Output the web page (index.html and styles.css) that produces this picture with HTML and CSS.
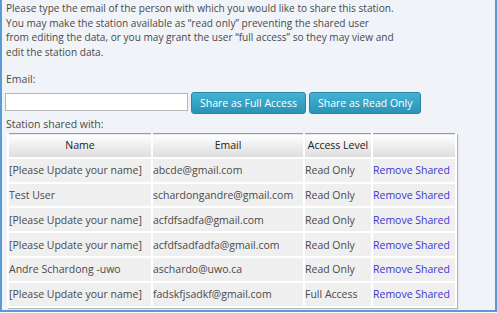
FILE: index.html
```html
<!DOCTYPE html>
<html lang="en">
<head>
  <meta charset="UTF-8" />
  <title>Share Station</title>
  <link rel="stylesheet" href="styles.css">
</head>
<body>
  <div class="panel">
    <p class="intro">
      Please type the email of the person with which you would like to share this station.<br>
      You may make the station available as &ldquo;read only&rdquo; preventing the shared user<br>
      from editing the data, or you may grant the user &ldquo;full access&rdquo; so they may view and<br>
      edit the station data.
    </p>

    <label class="field-label email-label" for="shareEmail">Email:</label>
    <div class="share-row">
      <input type="text" id="shareEmail">
      <button class="share-btn">Share as Full Access</button>
      <button class="share-btn">Share as Read Only</button>
    </div>

    <p class="field-label shared-label">Station shared with:</p>
    <table class="shared-table">
      <thead>
        <tr>
          <th class="col-name">Name</th>
          <th class="col-email">Email</th>
          <th class="col-access">Access Level</th>
          <th class="col-action"></th>
        </tr>
      </thead>
      <tbody>
        <tr><td>[Please Update your name]</td><td>abcde@gmail.com</td><td>Read Only</td><td><a href="#">Remove Shared</a></td></tr>
        <tr><td>Test User</td><td>schardongandre@gmail.com</td><td>Read Only</td><td><a href="#">Remove Shared</a></td></tr>
        <tr><td>[Please Update your name]</td><td>acfdfsadfa@gmail.com</td><td>Read Only</td><td><a href="#">Remove Shared</a></td></tr>
        <tr><td>[Please Update your name]</td><td>acfdfsadfadfa@gmail.com</td><td>Read Only</td><td><a href="#">Remove Shared</a></td></tr>
        <tr><td>Andre Schardong -uwo</td><td>aschardo@uwo.ca</td><td>Read Only</td><td><a href="#">Remove Shared</a></td></tr>
        <tr><td>[Please Update your name]</td><td>fadskfjsadkf@gmail.com</td><td>Full Access</td><td><a href="#">Remove Shared</a></td></tr>
      </tbody>
    </table>
  </div>
</body>
</html>
```

FILE: styles.css
```css
body {
  margin: 0;
  font-family: "Open Sans", Arial, sans-serif;
  font-size: 10.5px;
  color: #4a4a4a;
  background-color: #fff;
}

.panel {
  height: 312px;
  box-sizing: border-box;
  background-color: #f0f3f7;
  border: 2px solid #5b9bd5;
  border-top: none;
  padding: 1px 4px 0 4px;
}

.intro {
  margin: 0;
  font-size: 10.1px;
  line-height: 14.5px;
}

.field-label {
  display: block;
  line-height: 14.5px;
}

.email-label {
  margin: 13px 0 5px 0;
}

.shared-label {
  margin: 3px 0 2px 0;
}

.share-row {
  display: flex;
  align-items: flex-start;
  gap: 3px;
}

.share-row input {
  width: 183px;
  height: 18px;
  box-sizing: border-box;
  border: 1px solid #b5b5b5;
  background: #fff;
  margin: 1px 0 0 -1px;
}

.share-btn {
  height: 22px;
  padding: 0 8px;
  font-family: inherit;
  font-size: 10.5px;
  color: #fff;
  background: linear-gradient(#45b3d3, #2a93b6);
  border: 1px solid #2a85a5;
  border-radius: 3px;
  cursor: pointer;
}

.shared-table {
  margin-left: 1px;
  width: 450px;
  border-collapse: collapse;
  border: 1px solid #9a9a9a;
  box-shadow: 1px 1px 1px rgba(0,0,0,0.25);
}

.shared-table th,
.shared-table td {
  border: 2px solid #fff;
  height: 22.8px;
  padding: 0;
  text-align: left;
  font-weight: normal;
  white-space: nowrap;
}

.shared-table th {
  text-align: center;
  color: #222;
  background: linear-gradient(#ffffff, #dcdcdc);
}

.shared-table td {
  background-color: #efefef;
}

.shared-table tr:first-child th {
  border-top: none;
}

.col-name { width: 142px; }
.col-email { width: 150px; }
.col-access { width: 66px; }

.shared-table a {
  color: #3838d0;
  text-decoration: none;
}
```
